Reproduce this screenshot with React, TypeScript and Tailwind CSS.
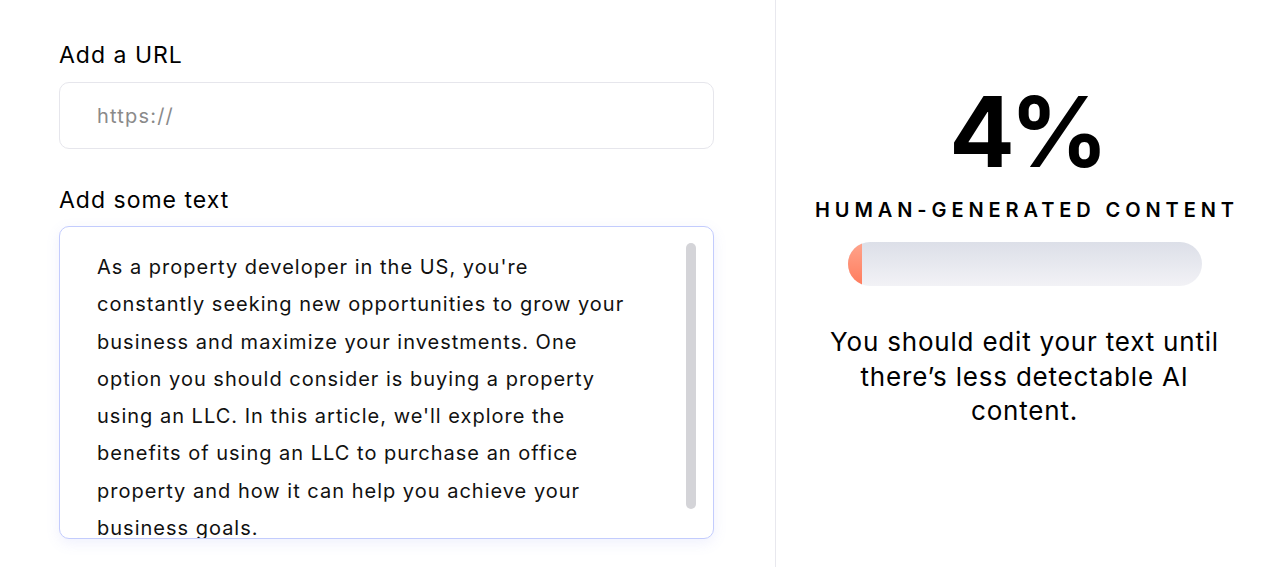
const lines = [
  "As a property developer in the US, you're",
  "constantly seeking new opportunities to grow your",
  "business and maximize your investments. One",
  "option you should consider is buying a property",
  "using an LLC. In this article, we'll explore the",
  "benefits of using an LLC to purchase an office",
  "property and how it can help you achieve your",
  "business goals.",
];

function InputPanel() {
  return (
    <div className="w-[776px] shrink-0 border-r border-[#e8e8ee] pl-[59px] pr-[61px] pt-[40px]">
      <label className="block text-[23px] leading-[30px] tracking-[1px] text-black">Add a URL</label>
      <div className="mt-3 h-[67px] rounded-[10px] border border-[#e6e6ec] flex items-center pl-[37px]">
        <span className="text-[20px] tracking-[1.2px] text-[#8a8a8a]">https://</span>
      </div>

      <label className="mt-[36px] block text-[23px] leading-[30px] tracking-[1px] text-black">Add some text</label>
      <div className="relative mt-[11px] h-[313px] overflow-hidden rounded-[10px] border border-[#c3ccfd] shadow-[0_4px_14px_rgba(120,130,240,0.12)] bg-white pl-[37px] pt-[22px]">
        {lines.map((l, i) => (
          <div key={i} className="whitespace-nowrap text-[20px] leading-[37.3px] tracking-[1px] text-[#111]">
            {l}
          </div>
        ))}
        <div className="absolute right-[17px] top-[16px] h-[266px] w-[10px] rounded-full bg-[#d4d4d8]" />
      </div>
    </div>
  );
}

function ScorePanel() {
  const pct = 4;
  return (
    <div className="flex-1 flex flex-col items-center pt-[78px] pl-[5px]">
      <div className="text-[97px] font-bold leading-[108px] text-black tracking-tighter pl-[4px]">{pct}%</div>
      <div className="mt-[12px] text-[20px] font-semibold leading-[24px] tracking-[0.245em] text-black pl-[0.245em]">
        HUMAN-GENERATED CONTENT
      </div>
      <div className="mt-[20px] h-[44px] w-[354px] overflow-hidden rounded-full bg-gradient-to-b from-[#dcdfe8] to-[#f2f2f6]">
        <div className="h-full w-[14px] bg-gradient-to-b from-[#ffa48c] to-[#ff7b5c]" />
      </div>
      <p className="mt-[39px] text-center text-[26px] leading-[34.5px] tracking-[0.8px] text-black">
        You should edit your text until
        <br />
        there’s less detectable AI
        <br />
        content.
      </p>
    </div>
  );
}

export default function App() {
  return (
    <div className="flex h-[567px] w-[1268px] bg-white font-['Inter',sans-serif] overflow-hidden">
      <InputPanel />
      <ScorePanel />
    </div>
  );
}
